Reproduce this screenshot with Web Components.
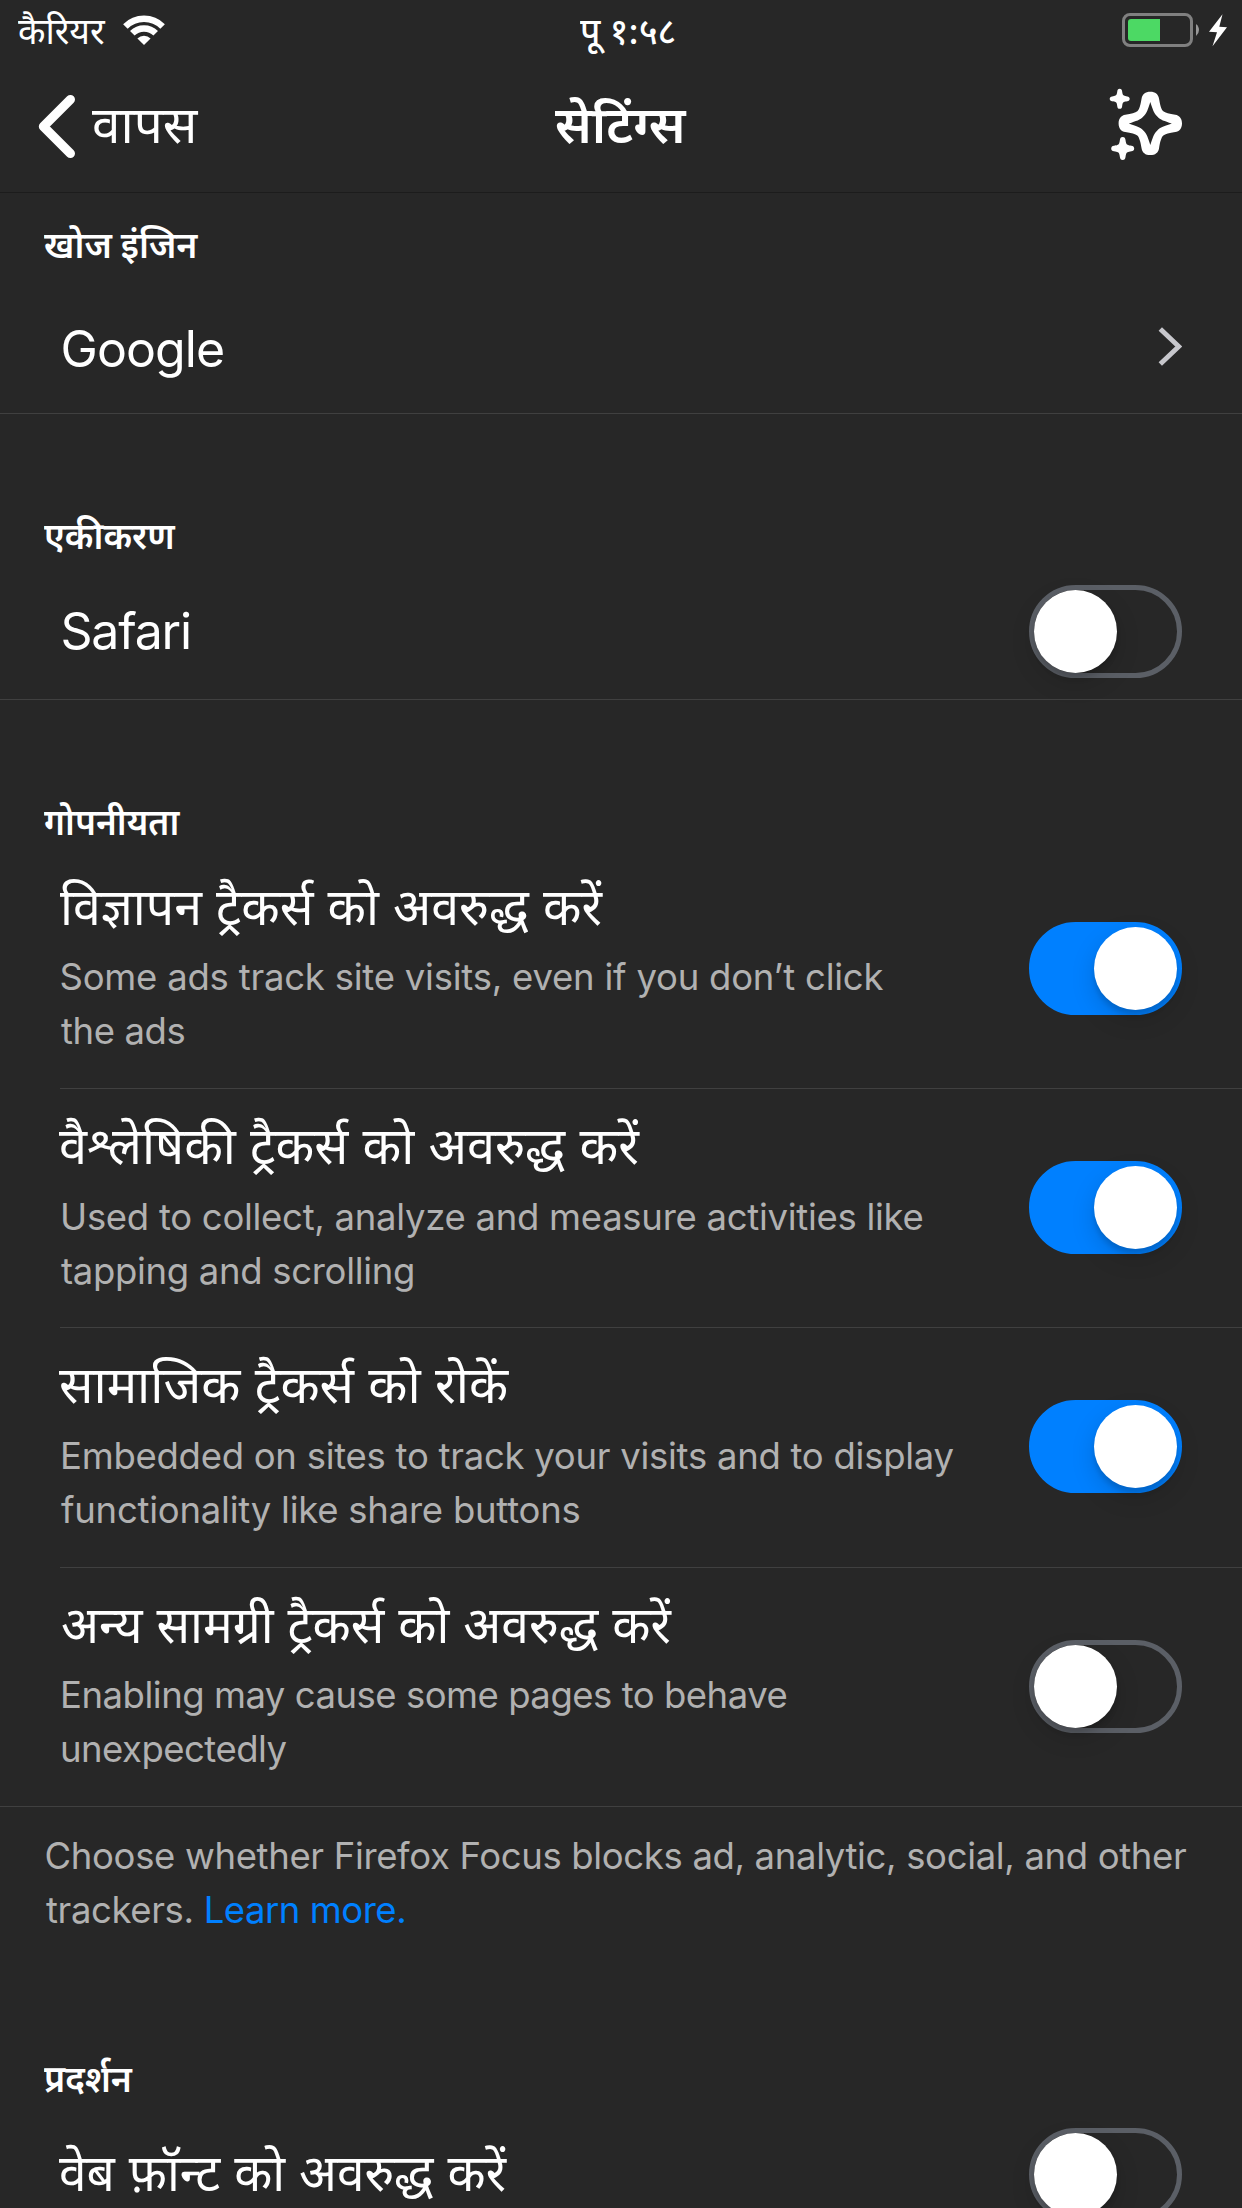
<!DOCTYPE html>
<html lang="hi">
<head>
<meta charset="utf-8">
<title>सेटिंग्स</title>
<style>
html,body{margin:0;background:#272727;color:#fff;height:2208px;overflow:hidden;font-family:Inter,"Noto Sans","Noto Sans Devanagari",sans-serif}
</style>
</head>
<body>
<settings-screen></settings-screen>
<script>
const define=(name,html,connected)=>{
  const t=document.createElement('template');t.innerHTML=html;
  customElements.define(name,class extends HTMLElement{
    constructor(){super();this.attachShadow({mode:'open'}).append(t.content.cloneNode(true));}
    connectedCallback(){connected&&connected.call(this,this.shadowRoot);}
  });
};

/* One line of text. Its baseline is the bottom edge of the box, "rise" px below the top.
   "ink" and "span" give the left edge and width of the drawn glyphs. */
const ctx=document.createElement('canvas').getContext('2d');
define('text-line',`<style>
:host{display:block;line-height:0;white-space:pre;text-align:left}
i{display:inline-block;width:0}
span{display:inline-block;line-height:0;transform-origin:0 0}
</style><i></i><span><slot></slot></span>`,function(root){
  const rise=+this.getAttribute('rise')||0,ink=+this.getAttribute('ink')||0,span=+this.getAttribute('span');
  root.querySelector('i').style.height=rise+'px';
  const s=root.querySelector('span'),cs=getComputedStyle(this),text=this.textContent;
  ctx.font=`${cs.fontWeight} ${cs.fontSize} ${cs.fontFamily}`;
  const m=ctx.measureText(text),w=m.actualBoundingBoxRight+m.actualBoundingBoxLeft;
  if(/[\u0900-\u097f]/.test(text)){
    const k=span/w;
    s.style.transform=`scaleX(${k})`;
    s.style.marginLeft=ink+m.actualBoundingBoxLeft*k+'px';
  }else{
    s.style.letterSpacing=(span-w)/([...text].length-1)+'px';
    s.style.marginLeft=ink+m.actualBoundingBoxLeft+'px';
  }
});

define('toggle-switch',`<style>
:host{display:block;flex:none;box-sizing:border-box;width:153px;height:93px;border-radius:47px;border:5px solid #5b5f66}
b{display:block;width:83px;height:83px;border-radius:50%;background:#fff;box-shadow:0 9px 24px rgba(0,0,0,.15),0 5px 5px rgba(0,0,0,.12)}
:host([on]){background:#0080ff;border-color:#0080ff}
:host([on]) b{margin-left:60px}
</style><b></b>`);

define('status-bar',`<style>
:host{display:flex;height:60px;justify-content:space-between;font-size:36px}
text-line{width:120px}
.l,.r{display:flex;width:414px}
.c{width:300px;font-weight:500}
.c text-line{width:auto}
.r{justify-content:flex-end}
svg{display:block}
</style>
<div class="l"><text-line rise="44" ink="18" span="88">कैरियर</text-line>
<svg width="50" height="60" viewBox="120 0 50 60"><g fill="none" stroke="#fff" stroke-width="6.4"><path d="M125.4 26.4A26.3 26.3 0 0 1 162.6 26.4"/><path d="M132.3 33.3A16.5 16.5 0 0 1 155.7 33.3"/></g><path d="M144 45L137.4 38.4A9.3 9.3 0 0 1 150.6 38.4Z" fill="#fff"/></svg></div>
<div class="c"><text-line rise="44" ink="109" span="95">पू १:५८</text-line></div>
<div class="r"><svg width="122" height="60" viewBox="1120 0 122 60"><rect x="1123.5" y="14.5" width="68" height="31" rx="6.5" fill="none" stroke="#808080" stroke-width="3"/><path d="M1131 19H1160V41H1131Q1128 41 1128 38V22Q1128 19 1131 19Z" fill="#4cd964"/><path d="M1196 24A7.5 7.5 0 0 1 1196 36Z" fill="#999"/><path d="M1222.5 14.3L1209 31.7L1217 32.3L1212.5 46.3L1227 27.3L1219.3 26.7Z" fill="#fff"/></svg></div>`);

define('nav-bar',`<style>
:host{display:flex;height:132px;justify-content:space-between;border-bottom:1px solid #1c1c1c;font-size:51px}
.l,.r{display:flex;width:414px}
.r{justify-content:flex-end}
.c{width:300px;font-weight:600}
svg{display:block;flex:none}
</style>
<div class="l"><svg width="90" height="132" viewBox="0 60 90 132"><path d="M70.4 99.6L43.4 126.5L70.4 153.4" fill="none" stroke="#fff" stroke-width="9.2" stroke-linecap="round" stroke-linejoin="round"/></svg><text-line rise="83" ink="2" span="107">वापस</text-line></div>
<div class="c"><text-line rise="83" ink="83.5" span="132">सेटिंग्स</text-line></div>
<div class="r"><svg width="142" height="132" viewBox="1100 60 142 132" fill="#fff">
<path transform="translate(1150.3 123.4)" fill-rule="evenodd" d="M0-31.7C5-31.7 8-29 8.7-25C9.8-18.5 11-14 13-12.2C14.8-10.6 19-9.5 25-8.7C29-8 31.7-5 31.7 0C31.7 5 29 8 25 8.7C19 9.5 14.8 10.6 13 12.2C11 14 9.8 18.5 8.7 25C8 29 5 31.7 0 31.7C-5 31.7-8 29-8.7 25C-9.8 18.5-11 14-13 12.2C-14.8 10.6-19 9.5-25 8.7C-29 8-31.7 5-31.7 0C-31.7-5-29-8-25-8.7C-19-9.5-14.8-10.6-13-12.2C-11-14-9.8-18.5-8.7-25C-8-29-5-31.7 0-31.7ZM0-21.5C-2.5-14-3.5-10-7-7C-10-3.5-14-2.5-21.5 0C-14 2.5-10 3.5-7 7C-3.5 10-2.5 14 0 21.5C2.5 14 3.5 10 7 7C10 3.5 14 2.5 21.5 0C14-2.5 10-3.5 7-7C3.5-10 2.5-14 0-21.5Z"/>
<path transform="translate(1119.7 98.8)" d="M0-10C1.7-10 2.2-9 2.4-7.6C2.8-4.8 3.1-3.8 4.2-3.3C5-2.8 6-2.6 7.6-2.4C9-2.2 10-1.5 10 0C10 1.5 9 2.2 7.6 2.4C6 2.6 5 2.8 4.2 3.3C3.1 3.8 2.8 4.8 2.4 7.6C2.2 9 1.7 10 0 10C-1.7 10-2.2 9-2.4 7.6C-2.8 4.8-3.1 3.8-4.2 3.3C-5 2.8-6 2.6-7.6 2.4C-9 2.2-10 1.5-10 0C-10-1.5-9-2.2-7.6-2.4C-6-2.6-5-2.8-4.2-3.3C-3.1-3.8-2.8-4.8-2.4-7.6C-2.2-9-1.7-10 0-10Z"/>
<path transform="translate(1122.7 148.5) scale(1.15)" d="M0-10C1.7-10 2.2-9 2.4-7.6C2.8-4.8 3.1-3.8 4.2-3.3C5-2.8 6-2.6 7.6-2.4C9-2.2 10-1.5 10 0C10 1.5 9 2.2 7.6 2.4C6 2.6 5 2.8 4.2 3.3C3.1 3.8 2.8 4.8 2.4 7.6C2.2 9 1.7 10 0 10C-1.7 10-2.2 9-2.4 7.6C-2.8 4.8-3.1 3.8-4.2 3.3C-5 2.8-6 2.6-7.6 2.4C-9 2.2-10 1.5-10 0C-10-1.5-9-2.2-7.6-2.4C-6-2.6-5-2.8-4.2-3.3C-3.1-3.8-2.8-4.8-2.4-7.6C-2.2-9-1.7-10 0-10Z"/></svg></div>`);

define('section-title',`<style>:host{display:block;padding-left:44px;font-size:37px;font-weight:600}</style><slot></slot>`);

define('setting-row',`<style>
:host{display:flex;flex-direction:column;box-sizing:border-box;height:var(--h)}
.b{display:flex;flex:1;min-height:0;justify-content:space-between;padding:0 60px 0 59px;font-size:51px}
.a{padding-top:var(--a)}
hr{margin:0;border:0;height:1px;flex:none;background:#404040}
:host([inset]) hr{margin-left:60px}
::slotted([slot=note]){font-size:36.5px;color:#b1b1b1}
</style><div class="b"><div><slot></slot><slot name="note"></slot></div><div class="a"><slot name="end"></slot></div></div><hr>`);

define('disclosure-arrow',`<style>:host,svg{display:block}</style><svg width="26" height="42" viewBox="1156 326 26 42"><path d="M1160.3 329L1178.8 346.5L1160.3 364" fill="none" stroke="#c7c7cc" stroke-width="4.9"/></svg>`);

define('section-note',`<style>:host{display:block;padding-left:44px;font-size:36.5px;color:#b1b1b1}</style><slot></slot>`);

define('settings-screen',`<style>
:host{display:block;width:1242px;height:2208px;overflow:hidden;background:#272727}
.two{display:flex}
.link{color:#0080ff}
.latin{font-size:50px}
</style>
<status-bar></status-bar>
<nav-bar></nav-bar>
<section-title><text-line rise="65" ink="0" span="154.5">खोज इंजिन</text-line></section-title>
<setting-row style="--h:156px;--a:68px"><text-line class="latin" rise="109" ink="3.5" span="160.5">Google</text-line><disclosure-arrow slot="end"></disclosure-arrow></setting-row>
<section-title><text-line rise="135" ink="0" span="132">एकीकरण</text-line></section-title>
<setting-row style="--h:151px;--a:36px"><text-line class="latin" rise="100" ink="3.5" span="127.5">Safari</text-line><toggle-switch slot="end"></toggle-switch></setting-row>
<section-title><text-line rise="135" ink="0" span="136">गोपनीयता</text-line></section-title>
<setting-row inset style="--h:254px;--a:87px"><text-line rise="90" ink="0.5" span="543">विज्ञापन ट्रैकर्स को अवरुद्ध करें</text-line><text-line slot="note" rise="65" ink="2.5" span="822">Some ads track site visits, even if you don’t click</text-line><text-line slot="note" rise="54" ink="2" span="123.5">the ads</text-line><toggle-switch slot="end" on></toggle-switch></setting-row>
<setting-row inset style="--h:239px;--a:72px"><text-line rise="75" ink="0" span="581">वैश्लेषिकी ट्रैकर्स को अवरुद्ध करें</text-line><text-line slot="note" rise="66" ink="4" span="859.5">Used to collect, analyze and measure activities like</text-line><text-line slot="note" rise="54" ink="2" span="352">tapping and scrolling</text-line><toggle-switch slot="end" on></toggle-switch></setting-row>
<setting-row inset style="--h:240px;--a:72px"><text-line rise="75" ink="0" span="450">सामाजिक ट्रैकर्स को रोकें</text-line><text-line slot="note" rise="66" ink="4" span="890.5">Embedded on sites to track your visits and to display</text-line><text-line slot="note" rise="54" ink="2" span="518.5">functionality like share buttons</text-line><toggle-switch slot="end" on></toggle-switch></setting-row>
<setting-row style="--h:239px;--a:72px"><text-line rise="75" ink="3" span="610">अन्य सामग्री ट्रैकर्स को अवरुद्ध करें</text-line><text-line slot="note" rise="65" ink="4" span="723.5">Enabling may cause some pages to behave</text-line><text-line slot="note" rise="54" ink="3" span="224.5">unexpectedly</text-line><toggle-switch slot="end"></toggle-switch></setting-row>
<section-note><text-line rise="62" ink="2.5" span="1139.5">Choose whether Firefox Focus blocks ad, analytic, social, and other</text-line><div class="two"><text-line rise="54" ink="2" span="145.5">trackers.</text-line><text-line class="link" rise="54" ink="13" span="197.5">Learn more.</text-line></div></section-note>
<section-title><text-line rise="169" ink="0" span="89">प्रदर्शन</text-line></section-title>
<setting-row style="--h:240px;--a:36px"><text-line rise="99" ink="0" span="448">वेब फ़ॉन्ट को अवरुद्ध करें</text-line><toggle-switch slot="end"></toggle-switch></setting-row>`);
</script>
</body>
</html>
